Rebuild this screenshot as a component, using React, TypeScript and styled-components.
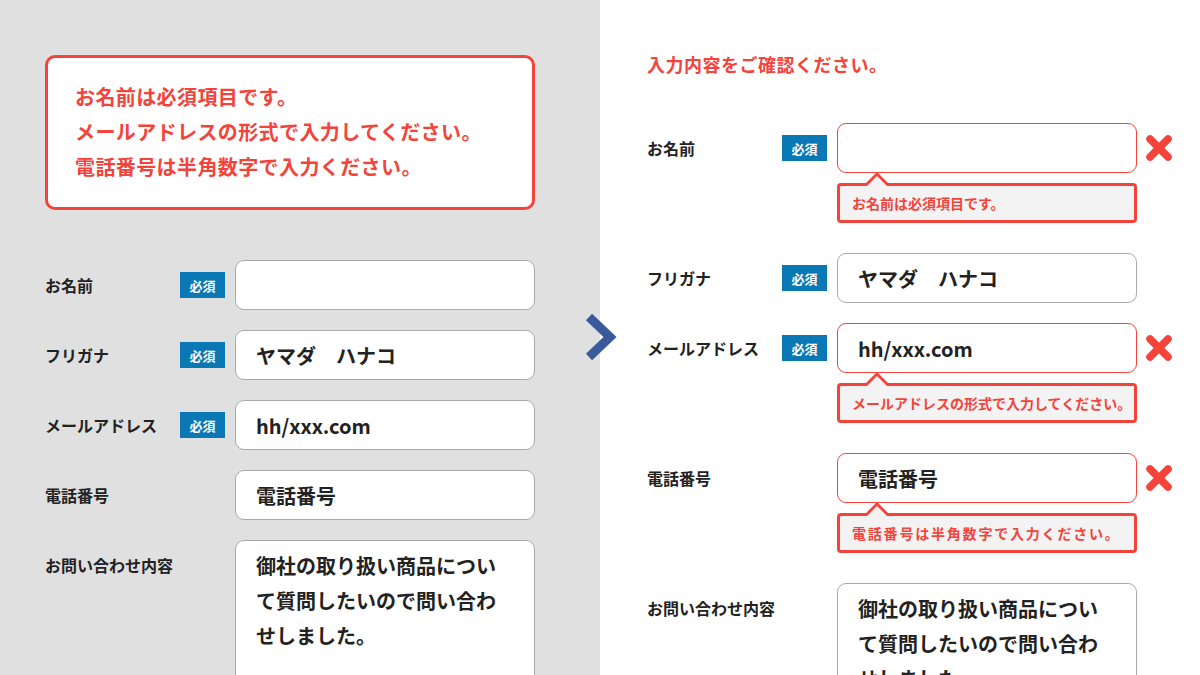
import React from "react";
import styled, { createGlobalStyle } from "styled-components";

const RED = "#f4433a";
const BLUE = "#0a78b4";

const GlobalStyle = createGlobalStyle`
  html, body {
    margin: 0;
    padding: 0;
    overflow: hidden;
  }
  body {
    font-family: "Noto Sans CJK JP", "Noto Sans", sans-serif;
    color: #222;
  }
`;

const Page = styled.div`
  position: relative;
  display: flex;
  width: 1200px;
  height: 675px;
  overflow: hidden;
`;

const Panel = styled.section<{ $tone: "gray" | "white" }>`
  width: 600px;
  height: 675px;
  box-sizing: border-box;
  background: ${(p) => (p.$tone === "gray" ? "#e0e0e0" : "#ffffff")};
  padding: ${(p) => (p.$tone === "gray" ? "55px 0 0 45px" : "50px 0 0 47px")};
`;

const SummaryBox = styled.div`
  width: 490px;
  box-sizing: border-box;
  background: #fff;
  border: 3px solid ${RED};
  border-radius: 10px;
  padding: 21px 20px 23px 27px;
  margin-bottom: 50px;
`;

const SummaryLine = styled.p`
  margin: 0;
  font-size: 20px;
  letter-spacing: 0.4px;
  line-height: 35px;
  font-weight: 700;
  color: ${RED};
  white-space: nowrap;
`;

const Notice = styled.p`
  margin: 0 0 45px;
  font-size: 18px;
  letter-spacing: 0.5px;
  line-height: 28px;
  font-weight: 700;
  color: ${RED};
`;

const Form = styled.div`
  display: flex;
  flex-direction: column;
  gap: 20px;
`;

const Row = styled.div`
  display: grid;
  grid-template-columns: 135px 55px 300px 36px;
  align-items: start;
`;

const Label = styled.div`
  height: 50px;
  display: flex;
  align-items: center;
  font-size: 16px;
  font-weight: 700;
  color: #222;
`;

const BadgeCell = styled.div`
  height: 50px;
  display: flex;
  align-items: center;
`;

const Badge = styled.span`
  width: 45px;
  height: 26px;
  display: flex;
  align-items: center;
  justify-content: center;
  background: ${BLUE};
  color: #fff;
  font-size: 13px;
  font-weight: 700;
`;

const Field = styled.div`
  display: flex;
  flex-direction: column;
`;

const Box = styled.div<{ $error?: boolean; $multi?: boolean }>`
  box-sizing: border-box;
  width: 300px;
  height: ${(p) => (p.$multi ? "170px" : "50px")};
  background: #fff;
  border: 1px solid ${(p) => (p.$error ? RED : "#aaa")};
  border-radius: 9px;
  padding: ${(p) => (p.$multi ? "7px 26px 0 20px" : "0 20px")};
  display: ${(p) => (p.$multi ? "block" : "flex")};
  align-items: center;
  font-size: 20px;
  line-height: 35px;
  font-weight: 700;
  color: #222;
  overflow: hidden;
`;

const Tip = styled.div<{ $spacing?: number }>`
  position: relative;
  box-sizing: border-box;
  width: 300px;
  height: 40px;
  margin: 10px 0 10px;
  background: #f3f3f3;
  border: 3px solid ${RED};
  border-radius: 4px;
  padding: 0 0 0 12px;
  display: flex;
  align-items: center;
  font-size: 14px;
  letter-spacing: ${(p) => p.$spacing ?? 0}px;
  font-weight: 700;
  color: ${RED};
  white-space: nowrap;

  &::before {
    content: "";
    position: absolute;
    left: 26px;
    top: -14px;
    border-left: 11px solid transparent;
    border-right: 11px solid transparent;
    border-bottom: 11px solid ${RED};
  }
  &::after {
    content: "";
    position: absolute;
    left: 27px;
    top: -10px;
    border-left: 10px solid transparent;
    border-right: 10px solid transparent;
    border-bottom: 10px solid #f3f3f3;
  }
`;

const Mark = styled.div`
  height: 50px;
  display: flex;
  align-items: center;
  justify-content: flex-end;
`;

const Arrow = styled.svg`
  position: absolute;
  left: 582px;
  top: 312px;
`;

const Cross = () => (
  <svg width="28" height="28" viewBox="0 0 28 28">
    <g stroke={RED} strokeWidth="7.5" strokeLinecap="round">
      <line x1="5" y1="5" x2="23" y2="23" />
      <line x1="23" y1="5" x2="5" y2="23" />
    </g>
  </svg>
);

type FieldDef = {
  label: string;
  required?: boolean;
  value?: string;
  multi?: boolean;
  error?: string;
  errorSpacing?: number;
};

const inquiry =
  "御社の取り扱い商品について質問したいので問い合わせしました。";

const leftFields: FieldDef[] = [
  { label: "お名前", required: true, value: "" },
  { label: "フリガナ", required: true, value: "ヤマダ　ハナコ" },
  { label: "メールアドレス", required: true, value: "hh/xxx.com" },
  { label: "電話番号", value: "電話番号" },
  { label: "お問い合わせ内容", multi: true, value: inquiry },
];

const rightFields: FieldDef[] = [
  { label: "お名前", required: true, value: "", error: "お名前は必須項目です。" },
  { label: "フリガナ", required: true, value: "ヤマダ　ハナコ" },
  {
    label: "メールアドレス",
    required: true,
    value: "hh/xxx.com",
    error: "メールアドレスの形式で入力してください。",
  },
  {
    label: "電話番号",
    value: "電話番号",
    error: "電話番号は半角数字で入力ください。",
    errorSpacing: 1.8,
  },
  { label: "お問い合わせ内容", multi: true, value: inquiry },
];

const FormRow = ({ f }: { f: FieldDef }) => (
  <Row>
    <Label>{f.label}</Label>
    <BadgeCell>{f.required && <Badge>必須</Badge>}</BadgeCell>
    <Field>
      <Box $error={!!f.error} $multi={f.multi}>
        {f.value}
      </Box>
      {f.error && <Tip $spacing={f.errorSpacing}>{f.error}</Tip>}
    </Field>
    <Mark>{f.error && <Cross />}</Mark>
  </Row>
);

export default function App() {
  return (
    <Page>
      <GlobalStyle />
      <Panel $tone="gray">
        <SummaryBox>
          <SummaryLine>お名前は必須項目です。</SummaryLine>
          <SummaryLine>メールアドレスの形式で入力してください。</SummaryLine>
          <SummaryLine>電話番号は半角数字で入力ください。</SummaryLine>
        </SummaryBox>
        <Form>
          {leftFields.map((f) => (
            <FormRow key={f.label} f={f} />
          ))}
        </Form>
      </Panel>
      <Panel $tone="white">
        <Notice>入力内容をご確認ください。</Notice>
        <Form>
          {rightFields.map((f) => (
            <FormRow key={f.label} f={f} />
          ))}
        </Form>
      </Panel>
      <Arrow width="36" height="52" viewBox="0 0 36 52">
        <polyline
          points="7,5 28,25 7,45"
          fill="none"
          stroke="#3b5a9b"
          strokeWidth="9"
          strokeLinejoin="miter"
        />
      </Arrow>
    </Page>
  );
}
